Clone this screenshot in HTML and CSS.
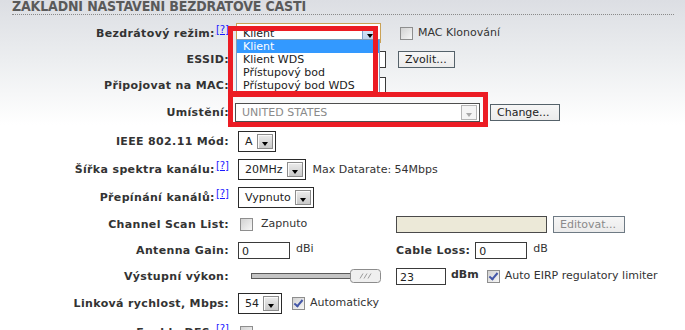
FILE: index.html
```html
<!DOCTYPE html>
<html lang="cs">
<head>
    <meta charset="UTF-8">
    <title>Základní nastavení bezdrátové části</title>
    <link rel="stylesheet" href="styles.css">
</head>
<body>
    <div class="page">
        <h2 class="section-title">ZÁKLADNÍ NASTAVENÍ BEZDRÁTOVÉ ČÁSTI</h2>

        <div class="form">
            <!-- Bezdrátový režim -->
            <div class="label">Bezdrátový režim:<sup class="help"><a href="#">[?]</a></sup></div>
            <div class="field">
                <span class="select select-mode"><span class="val">Klient</span><span class="arrow"></span></span>
            </div>
            <div class="extra">
                <span class="check"></span><span class="check-text">MAC Klonování</span>
            </div>

            <!-- ESSID -->
            <div class="label">ESSID:</div>
            <div class="field"><span class="input input-wide"></span></div>
            <div class="extra"><span class="button button-pick">Zvolit...</span></div>

            <!-- MAC -->
            <div class="label">Připojovat na MAC:</div>
            <div class="field"><span class="input input-wide"></span></div>
            <div class="extra"></div>

            <!-- Umisteni -->
            <div class="label">Umístění:</div>
            <div class="field span">
                <span class="select select-country disabled"><span class="val">UNITED STATES</span><span class="arrow"></span></span>
                <span class="button button-change">Change...</span>
            </div>

            <!-- IEEE -->
            <div class="label">IEEE 802.11 Mód:</div>
            <div class="field span">
                <span class="select"><span class="val">A</span><span class="arrow"></span></span>
            </div>

            <!-- Sirka spektra -->
            <div class="label">Šířka spektra kanálu:<sup class="help"><a href="#">[?]</a></sup></div>
            <div class="field span">
                <span class="select"><span class="val">20MHz</span><span class="arrow"></span></span>
                <span class="note">Max Datarate: 54Mbps</span>
            </div>

            <!-- Prepinani kanalu -->
            <div class="label">Přepínání kanálů:<sup class="help"><a href="#">[?]</a></sup></div>
            <div class="field span">
                <span class="select"><span class="val">Vypnuto</span><span class="arrow"></span></span>
            </div>

            <!-- Channel scan list -->
            <div class="label">Channel Scan List:</div>
            <div class="field">
                <span class="check check-first"></span><span class="check-text check-zap">Zapnuto</span>
            </div>
            <div class="extra">
                <span class="input input-wide input-off"></span>
                <span class="button button-off">Editovat...</span>
            </div>

            <!-- Antenna gain -->
            <div class="label">Antenna Gain:</div>
            <div class="field">
                <span class="input input-short input-first">0</span><span class="unit">dBi</span>
            </div>
            <div class="extra">
                <span class="label-inline">Cable Loss:</span>
                <span class="input input-short">0</span><span class="unit">dB</span>
            </div>

            <!-- Vystupni vykon -->
            <div class="label">Výstupní výkon:</div>
            <div class="field">
                <svg class="slider" width="131" height="15" viewBox="0 0 131 15">
                    <rect x="0.5" y="4.5" width="100" height="5" fill="#c4c4c4" stroke="#5a5a5a"/>
                    <rect x="99.5" y="0.5" width="30" height="13" rx="3" fill="#efefef" stroke="#8c8c8c"/>
                    <path d="M109 9.5 L112 4.5 M113 9.5 L116 4.5 M117 9.5 L120 4.5" stroke="#9a9a9a" stroke-width="1"/>
                </svg>
            </div>
            <div class="extra">
                <span class="input input-power">23</span>
                <span class="unit-bold">dBm</span>
                <span class="check checked"></span><span class="check-text">Auto EIRP regulatory limiter</span>
            </div>

            <!-- Linkova rychlost -->
            <div class="label">Linková rychlost, Mbps:</div>
            <div class="field span">
                <span class="select"><span class="val">54</span><span class="arrow"></span></span>
                <span class="check checked check-auto"></span><span class="check-text">Automaticky</span>
            </div>

            <!-- DFS -->
            <div class="label">Enable DFS:<sup class="help"><a href="#">[?]</a></sup></div>
            <div class="field span">
                <span class="check check-first"></span>
            </div>
        </div>

        <!-- open list of the mode select -->
        <ul class="dropdown">
            <li class="active">Klient</li>
            <li>Klient WDS</li>
            <li>Přístupový bod</li>
            <li>Přístupový bod WDS</li>
        </ul>

        <!-- red highlight frames -->
        <div class="mark mark-mode"></div>
        <div class="mark mark-country"></div>
    </div>
</body>
</html>
```

FILE: styles.css
```css
/* Reset */
* {
    margin: 0;
    padding: 0;
    box-sizing: border-box;
}

body {
    font-family: "DejaVu Sans", Verdana, sans-serif;
    font-size: 11px;
    color: #333;
    background: linear-gradient(#dcdee3 0, #eceef0 60px, #fff 125px);
    width: 685px;
    height: 330px;
    overflow: hidden;
}

.page {
    position: relative;
}

/* Section heading */
.section-title {
    font-family: "DejaVu Sans Condensed", "DejaVu Sans", sans-serif;
    font-weight: bold;
    font-size: 14px;
    line-height: 14px;
    letter-spacing: -0.15px;
    color: #5a5a5a;
    margin: -1px 0 0 12px;
    padding-bottom: 1px;
    width: 662px;
    border-bottom: 1px dotted #8a8a8a;
}

/* Form grid */
.form {
    display: grid;
    grid-template-columns: 229px 151px 1fr;
    grid-template-rows: 26px 26px 26px 28px 30px 26px 30px 24px 29px 22px 32px 26px;
    column-gap: 8px;
    align-items: center;
    margin-top: 5px;
}

.label {
    grid-column: 1;
    text-align: right;
    font-weight: bold;
    letter-spacing: 0.35px;
    color: #333;
    white-space: nowrap;
}

.field,
.extra {
    display: flex;
    align-items: center;
    white-space: nowrap;
}

.field.span {
    grid-column: 2 / 4;
}

.help {
    font-size: 10px;
    font-weight: normal;
    letter-spacing: 0;
    vertical-align: 4px;
    line-height: 0;
    margin-left: 1px;
}

.help a {
    color: #1a1aff;
}

/* Select boxes */
.select {
    display: inline-flex;
    align-items: center;
    height: 21px;
    padding: 0 2px 0 6px;
    border: 1px solid #2a2a2a;
    background: #fff;
    color: #222;
    margin-left: 1px;
}

.select .val {
    margin-right: 4px;
}

.select .arrow {
    position: relative;
    width: 16px;
    height: 15px;
    border: 1px solid #8c8c8c;
    background: linear-gradient(#ececec, #c9c9c9);
    box-shadow: inset 1px 1px #fafafa;
}

.select .arrow::after {
    content: "";
    position: absolute;
    left: 4px;
    top: 7px;
    border-left: 3px solid transparent;
    border-right: 3px solid transparent;
    border-top: 4px solid #000;
}

.select-mode {
    width: 145px;
    height: 20px;
    justify-content: space-between;
    border-color: #caa256;
    margin-left: -1px;
}

.select-mode .arrow {
    border-color: #7c9fcf;
    background: linear-gradient(#dbe8f8, #bcd2ee);
    box-shadow: none;
}

.select-country {
    width: 245px;
    height: 19px;
    justify-content: space-between;
    margin-left: -2px;
    border-color: #4e4e4e;
}

.select.disabled .val {
    color: #8a8a8a;
}

.select.disabled .arrow {
    border-color: #b4b4b4;
    background: #f4f4f4;
    box-shadow: none;
}

.select.disabled .arrow::after {
    border-top-color: #a8a8a8;
}

/* Text inputs */
.input {
    display: inline-block;
    height: 17px;
    line-height: 15px;
    padding: 1px 0 0 3px;
    border: 1px solid #3a3a3a;
    background: #fff;
    color: #222;
}

.input-wide {
    width: 150px;
    margin-left: -1px;
}

.input-off {
    width: 151px;
    margin-left: 0;
    background: #ece9d8;
    border-color: #4a4a4a;
}

.input-short {
    width: 52px;
}

.input-first {
    margin-left: 1px;
}

.input-power {
    width: 50px;
}

.unit {
    margin: -4px 0 0 6px;
}

.unit-bold {
    font-weight: bold;
    margin: -4px 0 0 5px;
}

.label-inline {
    font-weight: bold;
    letter-spacing: 0.35px;
    margin-right: 5px;
}

.note {
    margin-left: 7px;
}

/* Buttons */
.button {
    display: inline-block;
    height: 17px;
    line-height: 15px;
    padding: 0 6px;
    border: 1px solid #55626a;
    background: linear-gradient(#f6f6f6, #ebebeb);
    color: #222;
}

.button-pick {
    margin-left: 2px;
    width: 57px;
}

.button-change {
    margin-left: 10px;
    width: 70px;
}

.button-off {
    margin-left: 6px;
    width: 72px;
    color: #8a8a8a;
    border-color: #6e7a84;
}

/* Checkboxes */
.check {
    display: inline-block;
    position: relative;
    width: 13px;
    height: 13px;
    border: 1px solid #8e8e8e;
    background: linear-gradient(135deg, #d2d2d2, #f7f7f7);
    margin-left: 4px;
}

.check-first {
    margin-left: 3px;
}

.check.checked::after {
    content: "";
    position: absolute;
    left: 3px;
    top: 0;
    width: 3px;
    height: 7px;
    border: solid #4457a8;
    border-width: 0 2px 2px 0;
    transform: rotate(40deg);
}

.check-text {
    margin-left: 5px;
    margin-top: -2px;
}

.check-zap {
    margin-left: 8px;
}

.extra .check.checked {
    margin-left: 8px;
}

.check-auto {
    margin-left: 10px;
}

/* Slider */
.slider {
    margin-left: 14px;
    display: block;
}

/* Opened select list */
.dropdown {
    position: absolute;
    left: 236px;
    top: 40px;
    width: 144px;
    height: 55px;
    list-style: none;
    background: #fff;
    border: 1px solid #7f9db9;
    color: #222;
}

.dropdown li {
    height: 13px;
    line-height: 13px;
    padding-left: 6px;
}

.dropdown li.active {
    background: #3399ff;
    color: #fff;
}

/* Red highlight frames */
.mark {
    position: absolute;
    border: 5px solid #ec1c24;
}

.mark-mode {
    left: 228px;
    top: 27px;
    width: 150px;
    height: 70px;
}

.mark-country {
    left: 228px;
    top: 93px;
    width: 260px;
    height: 35px;
}
```
